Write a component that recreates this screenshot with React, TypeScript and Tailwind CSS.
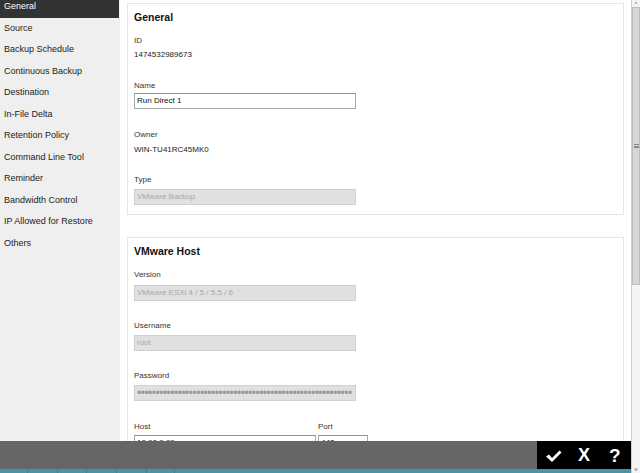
const menuItems = [
  "General",
  "Source",
  "Backup Schedule",
  "Continuous Backup",
  "Destination",
  "In-File Delta",
  "Retention Policy",
  "Command Line Tool",
  "Reminder",
  "Bandwidth Control",
  "IP Allowed for Restore",
  "Others",
];

function Label({ children }: { children: React.ReactNode }) {
  return <div className="h-[14px] leading-[14px] text-[8px] text-[#333]">{children}</div>;
}

function TextBox({ value, width = "w-[222px]" }: { value: string; width?: string }) {
  return (
    <div
      className={`${width} h-[16px] border border-[#a9a9a9] border-t-[#8f8f8f] bg-white px-[2px] text-[8px] leading-[14px] text-[#111] overflow-hidden whitespace-nowrap`}
    >
      {value}
    </div>
  );
}

function DisabledBox({ value, dots }: { value?: string; dots?: boolean }) {
  return (
    <div className="w-[222px] h-[16px] border border-[#d0d0d0] bg-[#e0e0e0] px-[2px] overflow-hidden whitespace-nowrap text-[8px] leading-[14px]">
      {dots ? (
        <span className="text-[12px] leading-[14px] tracking-[-0.5px] text-[#999]">{"•".repeat(58)}</span>
      ) : (
        <span className="text-[#a8a8a8]">{value}</span>
      )}
    </div>
  );
}

function Card({ title, children }: { title: string; children: React.ReactNode }) {
  return (
    <div className="border border-[#e5e5e5] bg-white pl-[6px] pt-[6px]">
      <div className="h-[14px] leading-[14px] text-[10.5px] font-bold text-[#111]">{title}</div>
      {children}
    </div>
  );
}

export default function App() {
  return (
    <div className="w-[640px] h-[473px] flex overflow-hidden bg-white font-['Liberation_Sans',Arial,sans-serif]">
      <div className="relative flex-1 flex">
        {/* left menu */}
        <div className="w-[120px] h-full bg-[#efefef]">
          <div className="-mt-[4px]">
            {menuItems.map((item, i) => (
              <div
                key={item}
                className={
                  i === 0
                    ? "h-[21.5px] w-[119px] bg-[#333333] text-white pl-[4px] text-[9px] flex items-center"
                    : "h-[21.5px] pl-[4px] text-[9px] text-[#222] flex items-center"
                }
              >
                {item}
              </div>
            ))}
          </div>
        </div>

        {/* settings */}
        <div className="flex-1 pt-[3px] px-[7px] flex flex-col gap-[22px]">
          <Card title="General">
            <div className="mt-[10px]">
              <Label>ID</Label>
              <div className="h-[14px] leading-[14px] text-[8px] text-[#222]">1474532989673</div>
            </div>
            <div className="mt-[17px]">
              <Label>Name</Label>
              <TextBox value="Run Direct 1" />
            </div>
            <div className="mt-[19px]">
              <Label>Owner</Label>
              <div className="h-[15px] leading-[15px] text-[8px] text-[#222]">WIN-TU41RC45MK0</div>
            </div>
            <div className="mt-[16px] pb-[9px]">
              <div className="mb-[2px]">
                <Label>Type</Label>
              </div>
              <DisabledBox value="VMware Backup" />
            </div>
          </Card>

          <Card title="VMware Host">
            <div className="mt-[10px]">
              <div className="mb-[3px]">
                <Label>Version</Label>
              </div>
              <DisabledBox value="VMware ESXi 4 / 5 / 5.5 / 6" />
            </div>
            <div className="mt-[18px]">
              <div className="mb-[2px]">
                <Label>Username</Label>
              </div>
              <DisabledBox value="root" />
            </div>
            <div className="mt-[18px]">
              <div className="mb-[2px]">
                <Label>Password</Label>
              </div>
              <DisabledBox dots />
            </div>
            <div className="mt-[19px] flex gap-[2px] pb-[40px]">
              <div>
                <div className="mb-[1px]">
                  <Label>Host</Label>
                </div>
                <TextBox value="10.90.9.99" width="w-[182px]" />
              </div>
              <div>
                <div className="mb-[1px]">
                  <Label>Port</Label>
                </div>
                <TextBox value="443" width="w-[50px]" />
              </div>
            </div>
          </Card>
        </div>

        {/* action bar */}
        <div className="absolute left-0 right-0 bottom-0">
          <div className="flex h-[28px]">
            <div className="flex-1 bg-[#666666]" />
            <div className="w-[94px] bg-black flex items-center text-white">
              <svg className="ml-[8px] mt-[2px]" width="17" height="12" viewBox="0 0 17 12">
                <path d="M1 6.5 L4 4.5 L7 8 L14.5 0.5 L16.5 2.5 L7 12 Z" fill="white" />
              </svg>
              <span className="ml-[16px] text-[18px] font-bold leading-none">X</span>
              <span className="ml-[19px] text-[19px] font-bold leading-none">?</span>
            </div>
          </div>
          <div className="h-[4px] bg-[#4795ab] flex">
            <div className="w-[28px] border-r border-[#3a7f93]" />
            <div className="w-[30px] border-r border-[#3a7f93]" />
            <div className="w-[29px] border-r border-[#3a7f93]" />
            <div className="w-[30px] border-r border-[#3a7f93]" />
            <div className="w-[30px] border-r border-[#3a7f93]" />
            <div className="w-[28px] border-r border-[#3a7f93]" />
          </div>
        </div>
      </div>

      {/* scrollbar */}
      <div className="w-[9px] h-full flex flex-col border-l border-[#cfcfcf] bg-[#f4f4f4]">
        <div className="h-[7px] flex items-center justify-center text-[6px] leading-none text-[#555]">
          ^
        </div>
        <div className="h-[278px] bg-[#d6d6d6] border border-[#bdbdbd] flex items-center justify-center">
          <div className="w-[5px] h-[4px] border-y border-[#888] flex items-center">
            <div className="w-full h-px bg-[#888]" />
          </div>
        </div>
        <div className="flex-1" />
        <div className="h-[8px] flex items-center justify-center text-[6px] leading-none text-[#555]">
          v
        </div>
      </div>
    </div>
  );
}
